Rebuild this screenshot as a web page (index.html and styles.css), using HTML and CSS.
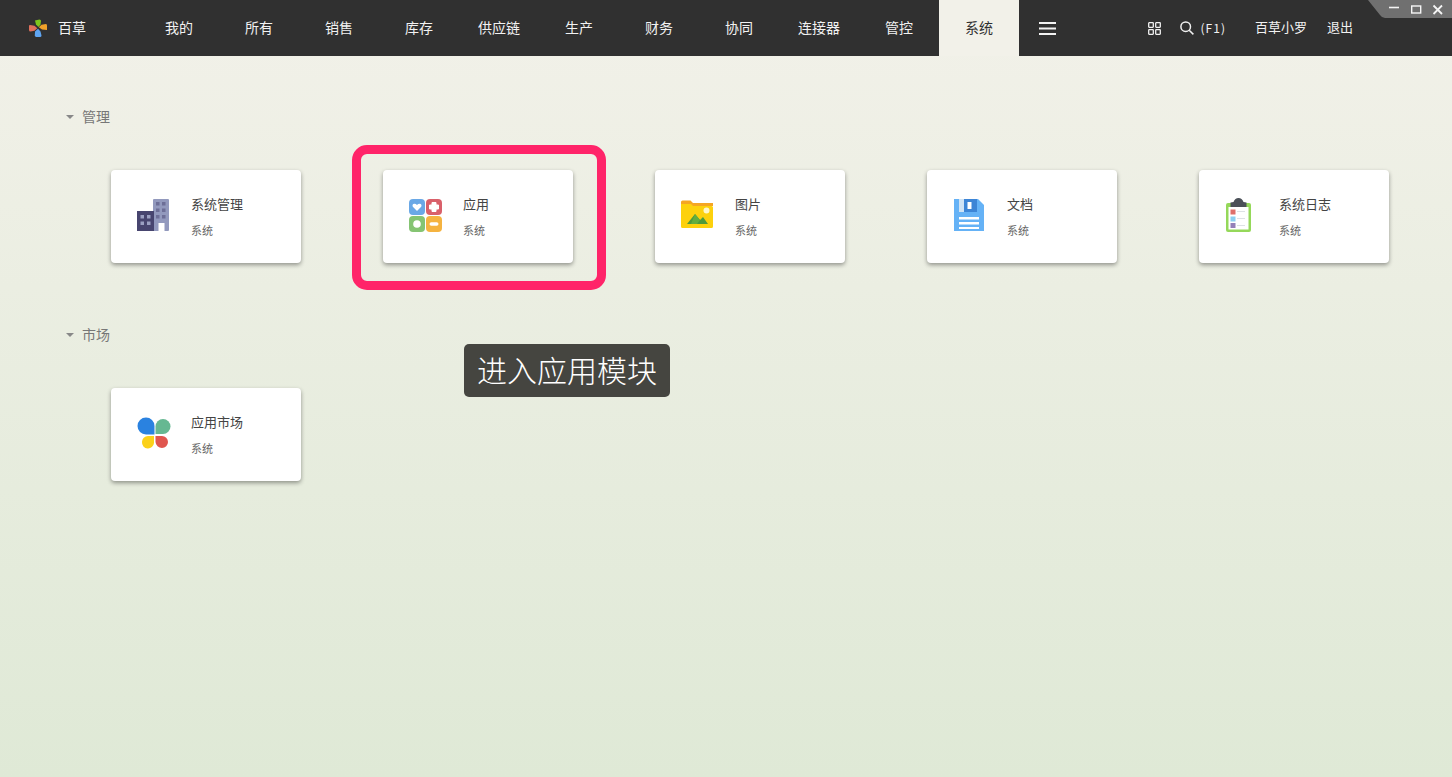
FILE: index.html
```html
<!DOCTYPE html>
<html lang="zh-CN">
<head>
<meta charset="utf-8">
<title>百草</title>
<link rel="stylesheet" href="styles.css">
</head>
<body>
<header class="topbar">
  <div class="brand">
    <svg class="brand-logo" viewBox="0 0 18 18"><path fill="#7ec61c" d="M6 1.500 10.500 .5Q12 .5 12 2L11.500 5.500 9.500 8 7 5.500Z"/><path fill="#f0a22a" d="M9.800 8.300 12.500 5.800 17 5Q18 5 18 6.500V11L13 10.500Z"/><path fill="#5fa5f2" d="M9 9.700 11.500 12.500 12.500 16.500Q12.500 18 11 18H7L5.800 17 6 12.500Z"/><path fill="#e0705c" d="M8.300 9.300 5.500 11.800 1.500 12.500Q0 12.500 0 11V7Q0 6 1 6L5.500 6.800Z"/></svg>
    <span class="brand-name">百草</span>
  </div>
  <nav class="nav">
    <a class="nav-item">我的</a>
    <a class="nav-item">所有</a>
    <a class="nav-item">销售</a>
    <a class="nav-item">库存</a>
    <a class="nav-item">供应链</a>
    <a class="nav-item">生产</a>
    <a class="nav-item">财务</a>
    <a class="nav-item">协同</a>
    <a class="nav-item">连接器</a>
    <a class="nav-item">管控</a>
    <a class="nav-item active">系统</a>
  </nav>
  <svg class="burger" viewBox="0 0 17 13"><path d="M0 1h17M0 6.500h17M0 12h17" stroke="#f2f2f2" stroke-width="2" fill="none"/></svg>
  <div class="tools">
    <svg class="tool-grid" viewBox="0 0 13 13" fill="none" stroke="#f0f0f0" stroke-width="1.300"><rect x=".7" y=".7" width="4.600" height="4.600" rx=".5"/><rect x="7.700" y=".7" width="4.600" height="4.600" rx=".5"/><rect x=".7" y="7.700" width="4.600" height="4.600" rx=".5"/><rect x="7.700" y="7.700" width="4.600" height="4.600" rx=".5"/></svg>
    <span class="search">
      <svg class="tool-search" viewBox="0 0 14 14" fill="none" stroke="#f0f0f0" stroke-width="1.500"><circle cx="5.700" cy="5.700" r="4.800"/><path d="M9.200 9.200 13.400 13.400"/></svg>
      <span class="hotkey">(F1)</span>
    </span>
    <span class="user">百草小罗</span>
    <span class="logout">退出</span>
  </div>
</header>

<main class="content">
  <section class="group">
    <h2 class="group-title"><i class="caret"></i>管理</h2>
    <div class="cards">
      <article class="card">
        <svg class="card-icon" viewBox="0 1 36 36"><rect x="18" y="2" width="16" height="32" rx="1" fill="#9299bd"/><rect x="2" y="14" width="17" height="20" fill="#47456f"/><g fill="#6d6f97"><rect x="21" y="5" width="3.500" height="3.500"/><rect x="27" y="5" width="3.500" height="3.500"/><rect x="21" y="11.500" width="3.500" height="3.500"/><rect x="27" y="11.500" width="3.500" height="3.500"/><rect x="21" y="18" width="3.500" height="3.500"/><rect x="27" y="18" width="3.500" height="3.500"/></g><g fill="#9ba0c2"><rect x="5.500" y="18" width="3.500" height="3.500"/><rect x="12" y="18" width="3.500" height="3.500"/><rect x="5.500" y="24.500" width="3.500" height="3.500"/><rect x="12" y="24.500" width="3.500" height="3.500"/></g><rect x="23.500" y="26" width="6" height="8" fill="#fff"/></svg>
        <div class="card-text"><h3 class="card-title">系统管理</h3><p class="card-sub">系统</p></div>
      </article>
      <article class="card">
        <svg class="card-icon" viewBox="0 1 36 36"><rect x="2" y="2" width="16" height="16" rx="4" fill="#6aa8e6"/><rect x="19" y="2" width="16" height="16" rx="4" fill="#d9606a"/><rect x="2" y="19" width="16" height="16" rx="4" fill="#85c473"/><rect x="19" y="19" width="16" height="16" rx="4" fill="#f5b340"/><path d="M10 14 5.800 9.800Q4.800 7 7.300 6.700 9 6.700 10 8 11 6.700 12.700 6.700 15.200 7 14.200 9.800Z" fill="#fff"/><path d="M25 5.500h4v2.500h2.500v4H29v2.500h-4V12h-2.500V8H25Z" fill="#fff" stroke="#fff" stroke-linejoin="round"/><circle cx="10" cy="27" r="3.800" fill="#fff"/><rect x="22.500" y="25.200" width="9" height="3.600" rx="1.800" fill="#fff"/></svg>
        <div class="card-text"><h3 class="card-title">应用</h3><p class="card-sub">系统</p></div>
      </article>
      <article class="card">
        <svg class="card-icon" viewBox="0 2 36 36"><path d="M2 6Q2 4.500 3.500 4.500H11.500L14 7H34V10H2Z" fill="#f5a623"/><path d="M2 8H12L14 10H32.500Q34 10 34 11.500V30.500Q34 32 32.500 32H3.500Q2 32 2 30.500Z" fill="#fdd10d"/><circle cx="27.500" cy="14.500" r="3" fill="#fff8cc"/><path d="M8 28 16 18 21 24 24 21 29 28Z" fill="#4f9a3c"/><path d="M16 18 21 24 18 28H12Z" fill="#63ae3f"/></svg>
        <div class="card-text"><h3 class="card-title">图片</h3><p class="card-sub">系统</p></div>
      </article>
      <article class="card">
        <svg class="card-icon" viewBox="0 1 36 36"><path d="M3 2H27L33 8V34H3Z" fill="#65b2f6"/><rect x="8" y="2" width="18" height="13" fill="#3d85d6"/><rect x="8" y="2" width="5" height="13" fill="#cfe3f5"/><rect x="16.500" y="5" width="4" height="7" fill="#fff"/><path d="M8 20h20v2.500H8ZM8 25h20v2.500H8ZM8 30h20v2H8Z" fill="#fff"/></svg>
        <div class="card-text"><h3 class="card-title">文档</h3><p class="card-sub">系统</p></div>
      </article>
      <article class="card">
        <svg class="card-icon" viewBox="3 1 36 36"><rect x="6" y="6" width="25" height="29" rx="2" fill="#95d85a"/><rect x="8.500" y="10" width="20" height="22.500" fill="#fff"/><path d="M10.500 5.500 13.500 5Q15 1 18.500 1T23.500 5L26.500 5.500V10H10.500Z" fill="#4b5058"/><rect x="10.500" y="12.500" width="5" height="5" fill="#df6f6a"/><rect x="10.500" y="19.500" width="5" height="5" fill="#8ccff0"/><rect x="10.500" y="26" width="5" height="5" fill="#9480b8"/><path d="M17 14.500h8M17 21.500h8M17 28.500h8" stroke="#dde1e5" stroke-width="1"/></svg>
        <div class="card-text"><h3 class="card-title">系统日志</h3><p class="card-sub">系统</p></div>
      </article>
    </div>
  </section>
  <section class="group">
    <h2 class="group-title"><i class="caret"></i>市场</h2>
    <div class="cards">
      <article class="card">
        <svg class="card-icon" viewBox="-1 0 36 36"><path d="M10 1.500A8.500 8.500 0 0 1 18.500 10V18.500H10A8.500 8.500 0 0 1 10 1.500Z" fill="#2a82e0"/><path d="M27 3A7.500 7.500 0 0 1 27 18H19.500V10.500A7.500 7.500 0 0 1 27 3Z" fill="#66b892"/><path d="M18 20V27A6 6 0 0 1 6 26 6 6 0 0 1 12 20Z" fill="#fbd11a"/><path d="M19.500 20H26A6 6 0 0 1 26 32 6.500 6.500 0 0 1 19.500 26Z" fill="#e0564f"/></svg>
        <div class="card-text"><h3 class="card-title">应用市场</h3><p class="card-sub">系统</p></div>
      </article>
    </div>
  </section>
</main>

<svg class="win-controls" viewBox="0 0 84 18"><path d="M0 0H84V18H17Q14 18 12 15Z" fill="#707070"/><path d="M21 7.500H31" stroke="#f5f5f5" stroke-width="1.600"/><rect x="43.700" y="6" width="9" height="7" fill="none" stroke="#f5f5f5" stroke-width="1.400"/><path d="M65.500 5.500 74 14M74 5.500 65.500 14" stroke="#f5f5f5" stroke-width="1.800"/></svg>
<div class="highlight"></div>
<div class="tip">进入应用模块</div>
</body>
</html>
```

FILE: styles.css
```css
* {
  box-sizing: border-box;
}

html,
body {
  height: 100%;
}

body {
  margin: 0;
  overflow: hidden;
  display: flex;
  flex-direction: column;
  font-family: "Noto Sans CJK SC", "Noto Sans", sans-serif;
  background: linear-gradient(180deg, #f2f1e9 0%, #dfe9d6 100%);
}

.topbar {
  height: 56px;
  flex: none;
  display: flex;
  align-items: center;
  background: #303030;
  color: #f2f2f2;
  font-size: 13px;
}

.brand {
  width: 139px;
  display: flex;
  align-items: center;
  gap: 11px;
  padding-left: 29px;
}

.brand-logo {
  width: 18px;
  height: 18px;
}

.brand-name {
  font-size: 14px;
  padding-bottom: 3px;
}

.nav {
  display: flex;
  height: 100%;
}

.nav-item {
  width: 80px;
  display: flex;
  align-items: center;
  justify-content: center;
  padding-bottom: 2px;
  font-size: 14px;
}

.nav-item.active {
  background: #f2f1e9;
  color: #303030;
}

.burger {
  width: 17px;
  height: 13px;
  margin-left: 20px;
}

.tools {
  margin-left: auto;
  margin-right: 99px;
  display: flex;
  align-items: center;
}

.tool-grid {
  width: 13px;
  height: 13px;
  margin-right: 19px;
}

.search {
  display: flex;
  align-items: center;
  gap: 7px;
  margin-right: 29px;
}

.tool-search {
  width: 14px;
  height: 14px;
}

.hotkey {
  font-size: 12px;
  letter-spacing: 1px;
  padding-bottom: 1px;
}

.user,
.logout {
  padding-bottom: 3px;
}

.logout {
  margin-left: 20px;
}

.content {
  flex: 1;
  padding-top: 51px;
}

.group {
  margin-bottom: 62px;
}

.group-title {
  margin: 0 0 43px;
  padding-left: 66px;
  height: 20px;
  display: flex;
  align-items: flex-start;
  gap: 8px;
  font-size: 14px;
  line-height: 18px;
  font-weight: 400;
  color: #777;
}

.caret {
  width: 0;
  height: 0;
  margin-top: 8px;
  border-left: 4.500px solid transparent;
  border-right: 4.500px solid transparent;
  border-top: 4px solid #888;
}

.cards {
  display: flex;
  gap: 82px;
  padding-left: 111px;
}

.card {
  width: 190px;
  height: 93px;
  display: flex;
  align-items: center;
  gap: 20px;
  padding-left: 24px;
  padding-bottom: 2px;
  background: #fff;
  border-radius: 4px;
  box-shadow: 0 2px 4px rgba(0, 0, 0, 0.38);
}

.card-icon {
  width: 36px;
  height: 36px;
  flex: none;
}

.card-text {
  display: flex;
  flex-direction: column;
  gap: 9px;
}

.card-title {
  margin: 0;
  font-size: 13px;
  line-height: 20px;
  font-weight: 400;
  color: #444;
}

.card-sub {
  margin: 0;
  font-size: 11px;
  line-height: 14px;
  color: #666;
}

.win-controls {
  position: absolute;
  top: 0;
  right: 0;
  width: 84px;
  height: 18px;
}

.highlight {
  position: absolute;
  left: 352px;
  top: 145px;
  width: 254px;
  height: 145px;
  border: 9px solid #ff2469;
  border-radius: 15px;
}

.tip {
  position: absolute;
  left: 464px;
  top: 344px;
  width: 206px;
  height: 53px;
  display: flex;
  align-items: center;
  justify-content: center;
  padding-bottom: 3px;
  background: #454540;
  border-radius: 5px;
  color: #fff;
  font-size: 30px;
  font-weight: 300;
}
```
